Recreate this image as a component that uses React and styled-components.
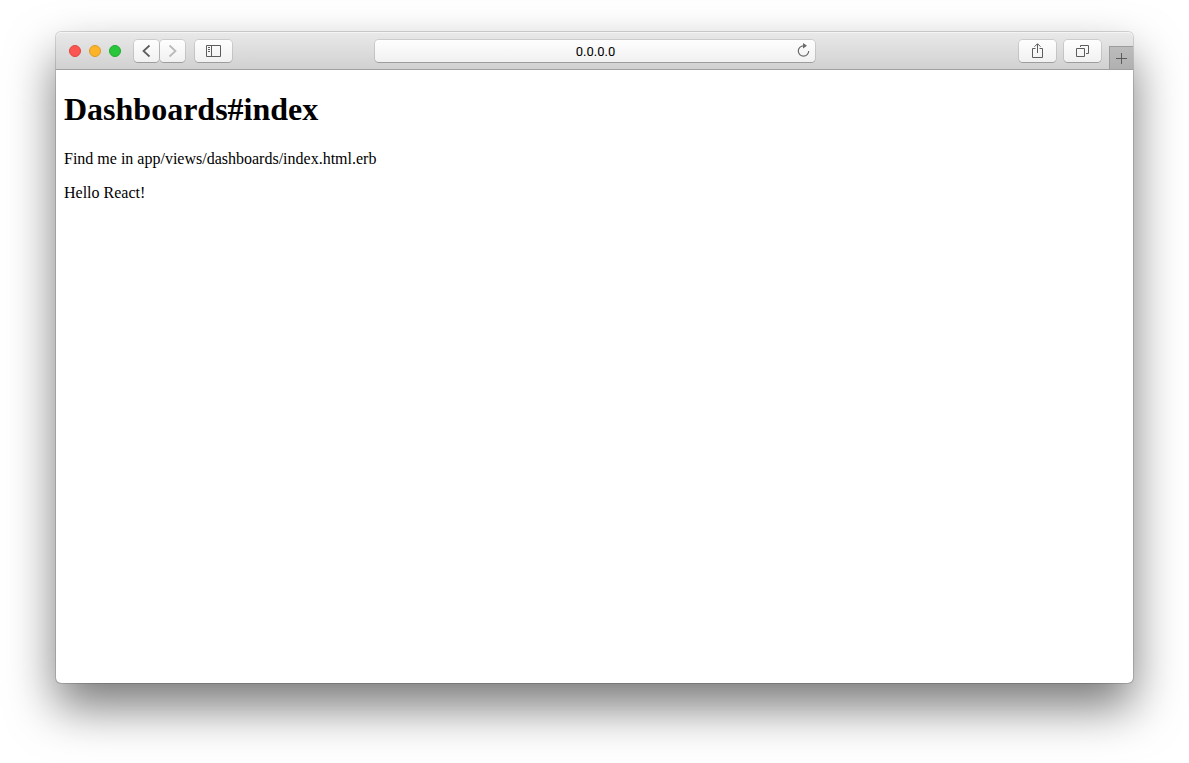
import React, { useState } from "react";
import styled, { createGlobalStyle } from "styled-components";

const GlobalStyle = createGlobalStyle`
  *, *::before, *::after { box-sizing: border-box; }
  body { margin: 0; background: #fff; color: #000; }
`;

const Desktop = styled.div`
  display: flex;
  min-height: 100vh;
  padding: 32px 56px 80px;
  overflow: hidden;
`;

const Window = styled.div`
  flex: 1;
  min-width: 0;
  display: flex;
  flex-direction: column;
  border-radius: 5px;
  background: #fff;
  box-shadow:
    0 0 1px 0 rgba(0, 0, 0, 0.5),
    0 0 0 1px rgba(0, 0, 0, 0.1),
    0 24px 48px 0 rgba(0, 0, 0, 0.53);
`;

const Toolbar = styled.header`
  display: grid;
  grid-template-columns: 1fr minmax(160px, 440px) 1fr;
  height: 38px;
  border-bottom: 1px solid #a0a0a0;
  border-radius: 5px 5px 0 0;
  background: linear-gradient(#e9e9e9, #d1d1d1);
  box-shadow: inset 0 1px 0 #f4f4f4;
  overflow: hidden;
`;

const LeftTools = styled.div`
  display: flex;
  align-items: flex-start;
  padding: 8px 0 0 13px;
`;

const RightTools = styled.div`
  display: flex;
  align-items: flex-start;
  justify-content: flex-end;
  gap: 8px;
  padding-top: 8px;
`;

const Lights = styled.div`
  display: flex;
  align-items: center;
  gap: 8px;
  height: 22px;
  margin-right: 13px;
`;

const Light = styled.button`
  width: 12px;
  height: 12px;
  padding: 0;
  border: 1px solid ${(p) => p.$edge};
  border-radius: 50%;
  background: ${(p) => p.$fill};
`;

const raised = `
  border: 0;
  border-radius: 4px;
  background: linear-gradient(#fefefe, #f1f1f1);
  box-shadow: 0 0 0 1px rgba(0, 0, 0, 0.1), 0 1px 0 0 rgba(0, 0, 0, 0.18);
`;

const ToolButton = styled.button`
  ${raised}
  display: flex;
  align-items: center;
  justify-content: center;
  width: ${(p) => (p.$narrow ? 25 : 37)}px;
  height: 22px;
  padding: 0;
  color: ${(p) => (p.disabled ? "#b8b8b8" : "#5c5c5c")};
`;

const NavPair = styled.div`
  display: flex;
  gap: 1px;
  margin-right: 10px;
`;

const Address = styled.form`
  ${raised}
  display: flex;
  align-items: center;
  height: 22px;
  margin-top: 8px;
  padding: 0 4px 0 22px;
`;

const AddressInput = styled.input`
  flex: 1;
  min-width: 0;
  height: 22px;
  padding: 1px 0 0;
  border: 0;
  outline: 0;
  background: transparent;
  color: #000;
  font: 13px/21px Roboto, "Liberation Sans", sans-serif;
  text-align: center;
`;

const ReloadButton = styled.button`
  display: flex;
  padding: 0;
  border: 0;
  background: transparent;
  color: #6a6a6a;
`;

const NewTab = styled.button`
  display: flex;
  align-items: center;
  justify-content: center;
  align-self: flex-end;
  width: 24px;
  height: 23px;
  padding: 0;
  border: solid #9d9d9d;
  border-width: 1px 0 0 1px;
  background: linear-gradient(#bcbcbc, #b0b0b0);
  color: #5a5a5a;
`;

const Page = styled.main`
  flex: 1;
  padding: 21px 8px;
  font: 16px/18px "Liberation Serif", "Times New Roman", serif;
`;

const Title = styled.h1`
  margin: 0 0 22px;
  font-size: 32px;
  line-height: 37px;
`;

const Paragraph = styled.p`
  margin: 0 0 16px;
`;

const Icon = ({ width = 16, height = 16, children }) => (
  <svg
    width={width}
    height={height}
    viewBox={`0 0 ${width} ${height}`}
    fill="none"
    stroke="currentColor"
    aria-hidden="true"
  >
    {children}
  </svg>
);

const lights = [
  { label: "Close", fill: "#fc5650", edge: "#e2443f" },
  { label: "Minimize", fill: "#fdb429", edge: "#df9b22" },
  { label: "Zoom", fill: "#27c63b", edge: "#1dad2b" },
];

export default function App() {
  const [url, setUrl] = useState("0.0.0.0");

  return (
    <>
      <GlobalStyle />
      <Desktop>
        <Window>
          <Toolbar>
            <LeftTools>
              <Lights>
                {lights.map((l) => (
                  <Light key={l.label} type="button" aria-label={l.label} $fill={l.fill} $edge={l.edge} />
                ))}
              </Lights>
              <NavPair>
                <ToolButton type="button" aria-label="Back" $narrow>
                  <Icon width={15}>
                    <path d="M10.500 2.500 4.500 8l6 5.500" strokeWidth="1.700" />
                  </Icon>
                </ToolButton>
                <ToolButton type="button" aria-label="Forward" $narrow disabled>
                  <Icon width={15}>
                    <path d="M4.500 2.500 10.500 8l-6 5.500" strokeWidth="1.700" />
                  </Icon>
                </ToolButton>
              </NavPair>
              <ToolButton type="button" aria-label="Show sidebar">
                <Icon width={15} height={12}>
                  <path d="M.5.5h14v11H.5zM5.500.5v11M2 2.500h2M2 4.500h2M2 6.500h2" />
                </Icon>
              </ToolButton>
            </LeftTools>

            <Address onSubmit={(e) => e.preventDefault()}>
              <AddressInput aria-label="Address" value={url} onChange={(e) => setUrl(e.target.value)} />
              <ReloadButton type="button" aria-label="Reload">
                <Icon>
                  <path d="M13.700 8A5.200 5.200 0 1 1 8.500 2.800" strokeWidth="1.200" />
                  <path d="M8 0v5.400L12 2.700z" fill="currentColor" stroke="none" />
                </Icon>
              </ReloadButton>
            </Address>

            <RightTools>
              <ToolButton type="button" aria-label="Share">
                <Icon width={11}>
                  <path d="M3.500 5.500h-3v9h10v-9h-3M5.500 10V1M2.500 3.700l3-3 3 3" />
                </Icon>
              </ToolButton>
              <ToolButton type="button" aria-label="Show all tabs">
                <Icon width={13} height={12}>
                  <path d="M.5 3.500h8v8h-8zM4.500 2V.5h8v8H10" />
                </Icon>
              </ToolButton>
              <NewTab type="button" aria-label="New tab">
                <Icon width={11} height={11}>
                  <path d="M5.500 0v11M0 5.500h11" />
                </Icon>
              </NewTab>
            </RightTools>
          </Toolbar>

          <Page>
            <Title>Dashboards#index</Title>
            <Paragraph>Find me in app/views/dashboards/index.html.erb</Paragraph>
            <Paragraph>Hello React!</Paragraph>
          </Page>
        </Window>
      </Desktop>
    </>
  );
}
